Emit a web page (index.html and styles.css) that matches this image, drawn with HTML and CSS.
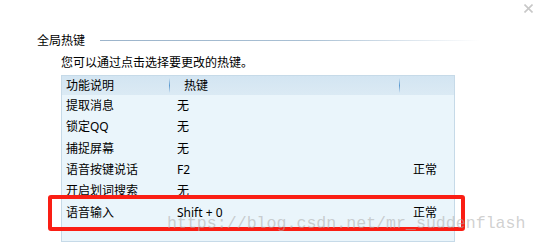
FILE: index.html
```html
<!DOCTYPE html>
<html lang="zh-CN">
<head>
  <meta charset="UTF-8" />
  <title>全局热键</title>
  <link rel="stylesheet" href="styles.css">
</head>
<body>

  <div class="titlebar">
    <svg class="close" width="9" height="9" viewBox="0 0 9 9">
      <path d="M0.5 0.5 L8.5 8.5 M8.5 0.5 L0.5 8.5" stroke="#c8c8c8" stroke-width="1.6" fill="none" />
    </svg>
  </div>

  <div class="group">
    <div class="groupTitle">
      <span>全局热键</span>
      <div class="groupLine"></div>
    </div>

    <div class="hint">您可以通过点击选择要更改的热键。</div>

    <div class="hotkeyTable">
      <div class="tableHead">
        <div class="headCell col1">功能说明</div>
        <span class="sep"></span>
        <div class="headCell col2">热键</div>
        <span class="sep"></span>
        <div class="headCell col3"></div>
      </div>

      <div class="row"><span class="c1">提取消息</span><span class="c2">无</span><span class="c3"></span></div>
      <div class="row"><span class="c1">锁定QQ</span><span class="c2">无</span><span class="c3"></span></div>
      <div class="row"><span class="c1">捕捉屏幕</span><span class="c2">无</span><span class="c3"></span></div>
      <div class="row"><span class="c1">语音按键说话</span><span class="c2">F2</span><span class="c3">正常</span></div>
      <div class="row"><span class="c1">开启划词搜索</span><span class="c2">无</span><span class="c3"></span></div>
      <div class="row"><span class="c1">语音输入</span><span class="c2">Shift + 0</span><span class="c3">正常</span></div>
    </div>
  </div>

  <!-- 标注框和水印 -->
  <div class="mark"></div>
  <div class="watermark">https://blog.csdn.net/mr_suddenflash</div>

</body>
</html>
```

FILE: styles.css
```css
body {
  margin: 0;
  width: 538px;
  height: 246px;
  background-color: #fff;
  color: #000;
  font-family: "Noto Sans", "Noto Sans CJK SC", sans-serif;
  font-size: 12px;
  overflow: hidden;
  position: relative;
}

.titlebar {
  height: 26px;
  display: flex;
  justify-content: flex-end;
  align-items: flex-start;
}

.close {
  margin-top: 4px;
  margin-right: 5px;
}

.group {
  padding: 7px 58px 0 37px;
}

.groupTitle {
  display: flex;
  align-items: center;
  height: 16px;
  line-height: 16px;
}

.groupLine {
  flex: 1;
  height: 1px;
  margin-left: 15px;
  margin-top: -2px;
  background: linear-gradient(to right, #9cb4cb, #a9c0d4 55%, rgba(255,255,255,0));
}

.hint {
  margin: 6px 0 0 24px;
  line-height: 16px;
}

.hotkeyTable {
  margin: 4px 0 0 24px;
  width: 394px;
  height: 167px;
  box-sizing: border-box;
  border: 1px solid #c6dae8;
  background-color: #eaf5fb;
}

.tableHead {
  display: flex;
  align-items: center;
  height: 19px;
  background: linear-gradient(to bottom, #d3e5f2, #dbeaf4);
}

.headCell {
  line-height: 19px;
}

.col1 {
  width: 103px;
  padding-left: 4px;
}

.col2 {
  width: 215px;
  padding-left: 14px;
}

.col3 {
  flex: 1;
}

.sep {
  width: 1px;
  height: 15px;
  background: linear-gradient(to bottom, rgba(90,150,205,0), #5c9ad0 50%, rgba(90,150,205,0));
}

.row {
  display: grid;
  grid-template-columns: 108px 230px 1fr;
  height: 21.33px;
  line-height: 21.33px;
}

.c1 {
  padding-left: 4px;
}

.c2 {
  padding-left: 7px;
}

.c3 {
  padding-left: 13px;
}

.mark {
  position: absolute;
  left: 48px;
  top: 195px;
  width: 417px;
  height: 36px;
  box-sizing: border-box;
  border: 4px solid #fa1e14;
  border-radius: 3px;
}

.watermark {
  position: absolute;
  left: 167px;
  top: 214px;
  font-family: "Liberation Mono", monospace;
  font-size: 16.6px;
  line-height: 20px;
  color: rgba(170, 170, 170, 0.55);
  white-space: nowrap;
}
```
